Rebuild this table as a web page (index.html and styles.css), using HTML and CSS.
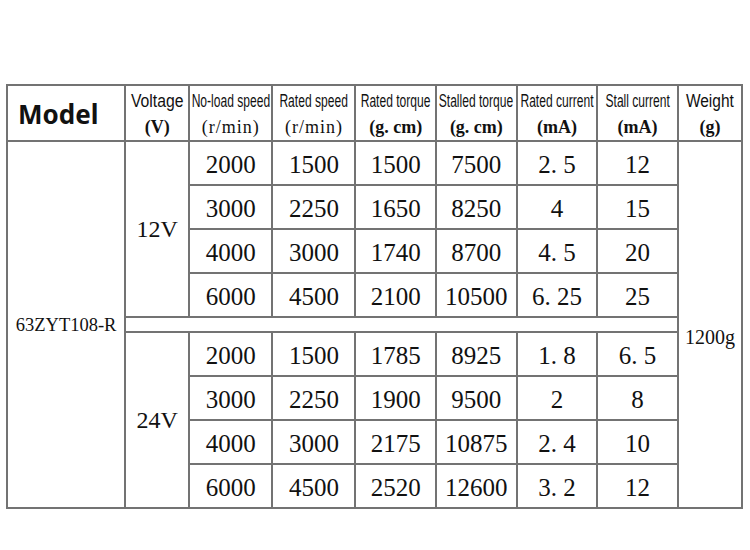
FILE: index.html
```html
<!DOCTYPE html>
<html>
<head>
<meta charset="utf-8">
<link rel="stylesheet" href="styles.css">
</head>
<body>
<div class="wrap">
<table class="spec">
  <colgroup>
    <col class="c-model"><col class="c-volt"><col class="c-std"><col class="c-std"><col class="c-mid"><col class="c-mid"><col class="c-mid"><col class="c-mid"><col class="c-weight">
  </colgroup>
  <thead>
    <tr class="head">
      <th class="model-h">Model</th>
      <th><div class="hd"><span class="lab wide">Voltage</span><span class="unit b">(V)</span></div></th>
      <th><div class="hd"><span class="lab">No-load speed</span><span class="unit sp">(r/min)</span></div></th>
      <th><div class="hd"><span class="lab">Rated speed</span><span class="unit sp">(r/min)</span></div></th>
      <th><div class="hd"><span class="lab">Rated torque</span><span class="unit b">(g. cm)</span></div></th>
      <th><div class="hd"><span class="lab">Stalled torque</span><span class="unit b">(g. cm)</span></div></th>
      <th><div class="hd"><span class="lab">Rated current</span><span class="unit b">(mA)</span></div></th>
      <th><div class="hd"><span class="lab">Stall current</span><span class="unit b">(mA)</span></div></th>
      <th><div class="hd"><span class="lab wide2">Weight</span><span class="unit b">(g)</span></div></th>
    </tr>
  </thead>
  <tbody>
    <tr class="row">
      <td class="model" rowspan="9">63ZYT108-R</td>
      <td class="volt" rowspan="4">12V</td>
      <td>2000</td><td>1500</td><td>1500</td><td>7500</td><td>2. 5</td><td>12</td>
      <td class="weight" rowspan="9">1200g</td>
    </tr>
    <tr class="row"><td>3000</td><td>2250</td><td>1650</td><td>8250</td><td>4</td><td>15</td></tr>
    <tr class="row"><td>4000</td><td>3000</td><td>1740</td><td>8700</td><td>4. 5</td><td>20</td></tr>
    <tr class="row"><td>6000</td><td>4500</td><td>2100</td><td>10500</td><td>6. 25</td><td>25</td></tr>
    <tr class="sep"><td colspan="7"></td></tr>
    <tr class="row">
      <td class="volt" rowspan="4">24V</td>
      <td>2000</td><td>1500</td><td>1785</td><td>8925</td><td>1. 8</td><td>6. 5</td>
    </tr>
    <tr class="row"><td>3000</td><td>2250</td><td>1900</td><td>9500</td><td>2</td><td>8</td></tr>
    <tr class="row"><td>4000</td><td>3000</td><td>2175</td><td>10875</td><td>2. 4</td><td>10</td></tr>
    <tr class="row"><td>6000</td><td>4500</td><td>2520</td><td>12600</td><td>3. 2</td><td>12</td></tr>
  </tbody>
</table>
</div>
</body>
</html>
```
FILE: styles.css
```css
html, body {
  margin: 0;
  padding: 0;
  background: #ffffff;
}
.wrap {
  padding: 84px 0 0 6px;
}
.spec {
  border-collapse: collapse;
  table-layout: fixed;
  width: 737px;
  color: #111;
  font-family: "Liberation Serif", serif;
}
.c-model { width: 118px; }
.c-volt { width: 64px; }
.c-std { width: 83px; }
.c-mid { width: 80.5px; }
.c-weight { width: 64px; }
.spec th, .spec td {
  border: 2px solid #737373;
  padding: 0;
  text-align: center;
  vertical-align: middle;
  white-space: nowrap;
  overflow: visible;
}
.head { height: 55px; }
.head th {
  font-weight: normal;
  padding-top: 2px;
}
.hd {
  display: flex;
  flex-direction: column;
  align-items: center;
}
.model-h {
  font-family: "Noto Sans", "DejaVu Sans", sans-serif;
  font-weight: 700 !important;
  font-size: 26px;
  text-align: left !important;
  padding-left: 10px !important;
  padding-bottom: 10px;
  color: #111;
}
.lab {
  display: block;
  flex: none;
  font-family: "Liberation Sans", Arial, sans-serif;
  font-size: 17.5px;
  line-height: 26px;
  transform: scaleX(0.69);
  transform-origin: center;
  color: #111;
}
.lab.wide { transform: scaleX(0.9); }
.lab.wide2 { transform: scaleX(0.86); font-size: 18px; }
.unit {
  display: block;
  flex: none;
  font-family: "Liberation Serif", serif;
  font-size: 18px;
  line-height: 26px;
  color: #111;
}
.unit.b { font-weight: bold; }
.unit.sp { letter-spacing: 1px; }
.row { height: 44px; }
.row td {
  font-size: 25px;
  padding-top: 3px;
}
.sep { height: 15px; }
.sep td { height: 11px; }
.spec td.model {
  font-size: 18.5px;
  padding-top: 2px;
}
.spec td.volt {
  font-size: 24px;
  padding-top: 0;
}
.spec td.weight {
  font-size: 20px;
  padding-top: 26px;
}
```
